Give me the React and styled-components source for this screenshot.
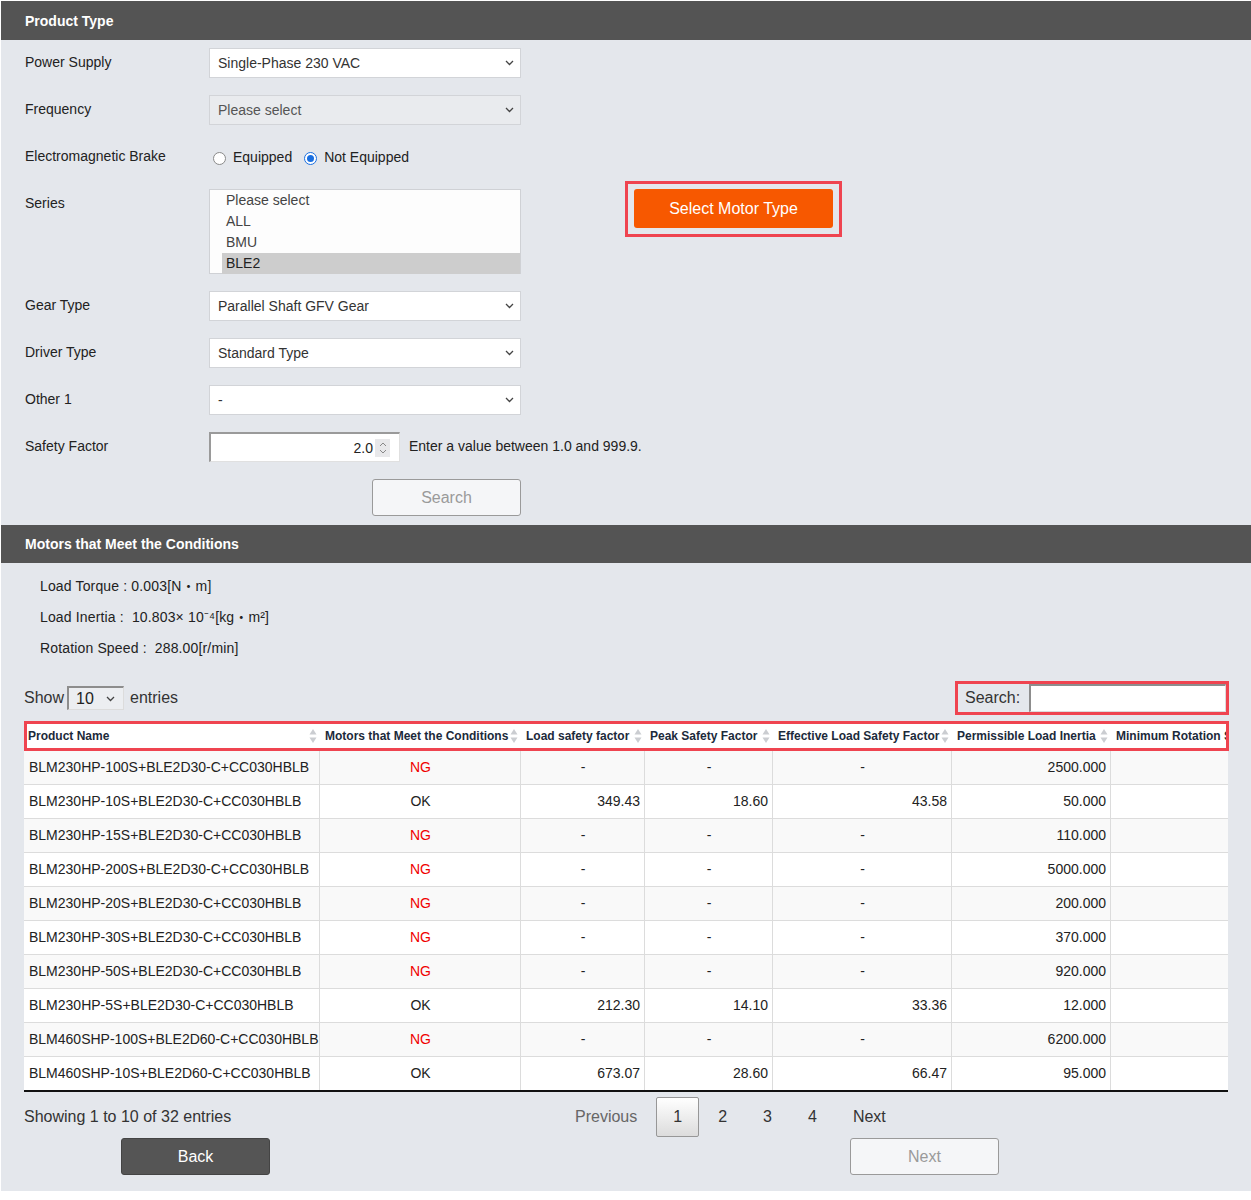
import React from 'react';
import styled, { createGlobalStyle } from 'styled-components';

const Global = createGlobalStyle`
  html, body { margin: 0; padding: 0; background: #fff; }
  body { font-family: "Liberation Sans", Arial, "Noto Sans CJK JP", sans-serif; color: #222; }
  * { box-sizing: border-box; }
`;

const RED = '#ef4450';
const COLS = [296, 201, 124, 128, 179, 159, 170];

const Page = styled.div`
  margin: 1px 0 0 1px;
  width: 1250px;
  background: #e4e7ec;
  padding-bottom: 16px;
`;

const SectionBar = styled.div`
  height: ${p => p.$h}px;
  background: #545454;
  color: #fff;
  font-weight: bold;
  font-size: 14px;
  display: flex;
  align-items: center;
  padding-left: 24px;
`;

const Form = styled.div`
  display: flex;
  flex-direction: column;
  gap: 17px;
  padding: 8px 0 9px 24px;
`;

const FormRow = styled.div`
  display: flex;
  align-items: flex-start;
  min-height: 30px;
`;

const Label = styled.div`
  width: 184px;
  line-height: 29px;
  font-size: 14px;
  color: #222;
`;

const SelectBox = styled.div`
  width: 312px;
  height: 30px;
  border: 1px solid #d2d4d8;
  background: ${p => (p.$disabled ? '#e9ebee' : '#fff')};
  color: ${p => (p.$disabled ? '#555' : '#333')};
  font-size: 14px;
  padding: 0 6px 0 8px;
  display: flex;
  align-items: center;
  justify-content: space-between;
`;

const Chevron = () => (
  <svg width="9" height="6" viewBox="0 0 9 6">
    <path d="M1 1 L4.5 4.5 L8 1" fill="none" stroke="#444" strokeWidth="1.3" />
  </svg>
);

const Select = ({ value, disabled }) => (
  <SelectBox $disabled={disabled}>
    <span>{value}</span>
    <Chevron />
  </SelectBox>
);

const RadioGroup = styled.div`
  height: 30px;
  display: flex;
  align-items: center;
  font-size: 14px;
  color: #222;
`;

const RadioOption = styled.label`
  display: flex;
  align-items: center;
  gap: 7px;
  margin-left: ${p => p.$ml}px;
`;

const RadioDot = styled.span`
  width: 13px;
  height: 13px;
  border-radius: 50%;
  background: #fff;
  border: 1px solid ${p => (p.$checked ? '#1a6fe0' : '#8a8a8a')};
  display: flex;
  align-items: center;
  justify-content: center;
  margin-top: 2px;
  &::after {
    content: '';
    width: 7px;
    height: 7px;
    border-radius: 50%;
    background: ${p => (p.$checked ? '#1a6fe0' : 'transparent')};
  }
`;

const ListBox = styled.div`
  width: 312px;
  height: 85px;
  border: 1px solid #cfd1d5;
  background: #fdfdfd;
  display: flex;
  flex-direction: column;
`;

const ListItem = styled.div`
  height: 21px;
  line-height: 21px;
  margin-left: 12px;
  padding-left: 4px;
  font-size: 14px;
  color: ${p => (p.$selected ? '#222' : '#444')};
  background: ${p => (p.$selected ? '#cdcdcd' : 'transparent')};
`;

const MotorBtnFrame = styled.div`
  margin: -8px 0 0 104px;
  border: 3px solid ${RED};
  padding: 5px 6px 6px;
`;

const OrangeButton = styled.button`
  width: 199px;
  height: 39px;
  border: none;
  border-radius: 3px;
  background: #f75800;
  color: #fff;
  font-family: inherit;
  font-size: 16px;
`;

const NumberBox = styled.div`
  width: 191px;
  height: 30px;
  background: #fff;
  border-style: solid;
  border-width: 2px 1px 1px 2px;
  border-color: #9a9a9a #e0e0e0 #e0e0e0 #9a9a9a;
  display: flex;
  align-items: center;
  justify-content: flex-end;
  padding-right: 9px;
  font-size: 14px;
  color: #222;
`;

const Spinner = styled.span`
  width: 15px;
  height: 18px;
  margin-left: 2px;
  background: #e8e8ea;
  display: flex;
  flex-direction: column;
  align-items: center;
  justify-content: center;
  gap: 2px;
`;

const Hint = styled.span`
  margin-left: 9px;
  line-height: 29px;
  font-size: 14px;
  color: #222;
`;

const ButtonRow = styled.div`
  padding-left: 347px;
`;

const GhostButton = styled.button`
  width: 149px;
  height: 37px;
  border: 1px solid #9a9a9a;
  border-radius: 3px;
  background: #f5f6f8;
  color: #9a9a9a;
  font-family: inherit;
  font-size: 16px;
  margin-left: ${p => p.$ml || 0}px;
`;

const Info = styled.div`
  padding: 8px 0 0 39px;
  font-size: 14px;
  color: #222;
`;

const InfoLine = styled.div`
  line-height: 31px;
  white-space: pre;
  letter-spacing: 0.15px;
`;

const ControlsRow = styled.div`
  margin-top: 17px;
  padding: 0 22px 0 23px;
  height: 34px;
  display: flex;
  align-items: center;
  justify-content: space-between;
  font-size: 16px;
  color: #333;
`;

const ShowGroup = styled.div`
  display: flex;
  align-items: center;
`;

const LengthSelect = styled.div`
  width: 57px;
  height: 24px;
  margin: 0 6px 0 3px;
  background: #eceef1;
  border-style: solid;
  border-width: 2px 1px 1px 2px;
  border-color: #8d8d8d #dcdcdc #dcdcdc #8d8d8d;
  padding: 0 8px 0 7px;
  display: flex;
  align-items: center;
  justify-content: space-between;
  color: #222;
`;

const SearchFrame = styled.div`
  width: 274px;
  height: 34px;
  border: 3px solid ${RED};
  display: flex;
  align-items: center;
  padding-left: 7px;
  gap: 9px;
`;

const SearchInput = styled.div`
  flex: 1;
  height: 28px;
  background: #fff;
  border-style: solid;
  border-width: 2px 1px 1px 2px;
  border-color: #8d8d8d #dcdcdc #dcdcdc #8d8d8d;
`;

const TableArea = styled.div`
  margin: 6px 22px 0 23px;
`;

const HeadFrame = styled.div`
  border: 3px solid ${RED};
  background: #fff;
  overflow: hidden;
  height: 30px;
`;

const Grid = styled.div`
  display: grid;
  grid-template-columns: ${p => p.$cols.map(c => `${c}px`).join(' ')};
  width: max-content;
`;

const HeadCell = styled.div`
  height: 24px;
  display: flex;
  align-items: center;
  justify-content: space-between;
  padding: 0 3px 0 ${p => (p.$first ? 1 : 5)}px;
  font-size: 12px;
  font-weight: bold;
  color: #1c2a3b;
  white-space: nowrap;
  overflow: hidden;
`;

const SortIcon = () => (
  <svg width="8" height="16" viewBox="0 0 8 16" style={{ flex: 'none' }}>
    <path d="M4 1 L7.5 6.5 L0.5 6.5 Z" fill="#cbcdd1" />
    <path d="M4 15 L7.5 9.5 L0.5 9.5 Z" fill="#cbcdd1" />
  </svg>
);

const BodyFrame = styled.div`
  overflow: hidden;
  width: 1204px;
  border-bottom: 2px solid #111;
`;

const Row = styled(Grid)`
  background: ${p => (p.$odd ? '#f9f9f9' : '#fff')};
  border-bottom: ${p => (p.$last ? 'none' : '1px solid #dcdcdc')};
`;

const Cell = styled.div`
  height: 33px;
  display: flex;
  align-items: center;
  justify-content: ${p => p.$align};
  padding: 0 4px 1px 5px;
  border-right: 1px solid #dcdcdc;
  font-size: 14px;
  color: ${p => (p.$ng ? '#f00000' : '#222')};
  white-space: nowrap;
`;

const FooterTop = styled.div`
  display: flex;
  align-items: center;
  margin-top: 5px;
  padding-left: 23px;
  font-size: 16px;
  color: #333;
`;

const FooterInfo = styled.div`
  flex: 0 0 532px;
`;

const Pager = styled.div`
  display: flex;
  align-items: center;
`;

const PageBtn = styled.span`
  height: 40px;
  line-height: 38px;
  padding: 0 16px;
  margin-left: 2px;
  border: 1px solid ${p => (p.$current ? '#979797' : 'transparent')};
  border-radius: 2px;
  background: ${p => (p.$current ? 'linear-gradient(#ffffff, #dcdcdc)' : 'transparent')};
  color: ${p => (p.$disabled ? '#666' : '#333')};
`;

const FooterBottom = styled.div`
  display: flex;
  margin-top: 1px;
  padding-left: 120px;
`;

const DarkButton = styled.button`
  width: 149px;
  height: 37px;
  border: 1px solid #444;
  border-radius: 3px;
  background: #555;
  color: #fff;
  font-family: inherit;
  font-size: 16px;
`;

const rows = [
  ['BLM230HP-100S+BLE2D30-C+CC030HBLB', 'NG', '-', '-', '-', '2500.000'],
  ['BLM230HP-10S+BLE2D30-C+CC030HBLB', 'OK', '349.43', '18.60', '43.58', '50.000'],
  ['BLM230HP-15S+BLE2D30-C+CC030HBLB', 'NG', '-', '-', '-', '110.000'],
  ['BLM230HP-200S+BLE2D30-C+CC030HBLB', 'NG', '-', '-', '-', '5000.000'],
  ['BLM230HP-20S+BLE2D30-C+CC030HBLB', 'NG', '-', '-', '-', '200.000'],
  ['BLM230HP-30S+BLE2D30-C+CC030HBLB', 'NG', '-', '-', '-', '370.000'],
  ['BLM230HP-50S+BLE2D30-C+CC030HBLB', 'NG', '-', '-', '-', '920.000'],
  ['BLM230HP-5S+BLE2D30-C+CC030HBLB', 'OK', '212.30', '14.10', '33.36', '12.000'],
  ['BLM460SHP-100S+BLE2D60-C+CC030HBLB', 'NG', '-', '-', '-', '6200.000'],
  ['BLM460SHP-10S+BLE2D60-C+CC030HBLB', 'OK', '673.07', '28.60', '66.47', '95.000'],
];

const headers = [
  'Product Name',
  'Motors that Meet the Conditions',
  'Load safety factor',
  'Peak Safety Factor',
  'Effective Load  Safety Factor',
  'Permissible Load Inertia',
  'Minimum Rotation Speed',
];

const headCols = [COLS[0] - 3, ...COLS.slice(1)];

export default function App() {
  return (
    <>
      <Global />
      <Page>
        <SectionBar $h={39}>Product Type</SectionBar>
        <Form>
          <FormRow>
            <Label>Power Supply</Label>
            <Select value="Single-Phase 230 VAC" />
          </FormRow>
          <FormRow>
            <Label>Frequency</Label>
            <Select value="Please select" disabled />
          </FormRow>
          <FormRow>
            <Label>Electromagnetic Brake</Label>
            <RadioGroup>
              <RadioOption $ml={4}>
                <RadioDot />
                Equipped
              </RadioOption>
              <RadioOption $ml={12}>
                <RadioDot $checked />
                Not Equipped
              </RadioOption>
            </RadioGroup>
          </FormRow>
          <FormRow>
            <Label>Series</Label>
            <ListBox>
              <ListItem>Please select</ListItem>
              <ListItem>ALL</ListItem>
              <ListItem>BMU</ListItem>
              <ListItem $selected>BLE2</ListItem>
            </ListBox>
            <MotorBtnFrame>
              <OrangeButton>Select Motor Type</OrangeButton>
            </MotorBtnFrame>
          </FormRow>
          <FormRow>
            <Label>Gear Type</Label>
            <Select value="Parallel Shaft GFV Gear" />
          </FormRow>
          <FormRow>
            <Label>Driver Type</Label>
            <Select value="Standard Type" />
          </FormRow>
          <FormRow>
            <Label>Other 1</Label>
            <Select value="-" />
          </FormRow>
          <FormRow>
            <Label>Safety Factor</Label>
            <NumberBox>
              2.0
              <Spinner>
                <svg width="8" height="5" viewBox="0 0 8 5">
                  <path d="M1 4 L4 1 L7 4" fill="none" stroke="#888" strokeWidth="1" />
                </svg>
                <svg width="8" height="5" viewBox="0 0 8 5">
                  <path d="M1 1 L4 4 L7 1" fill="none" stroke="#888" strokeWidth="1" />
                </svg>
              </Spinner>
            </NumberBox>
            <Hint>Enter a value between 1.0 and 999.9.</Hint>
          </FormRow>
          <ButtonRow>
            <GhostButton>Search</GhostButton>
          </ButtonRow>
        </Form>

        <SectionBar $h={38}>Motors that Meet the Conditions</SectionBar>
        <Info>
          <InfoLine>Load Torque : 0.003[N・m]</InfoLine>
          <InfoLine>Load Inertia :  10.803× 10⁻⁴[kg・m²]</InfoLine>
          <InfoLine>Rotation Speed :  288.00[r/min]</InfoLine>
        </Info>

        <ControlsRow>
          <ShowGroup>
            Show
            <LengthSelect>
              <span>10</span>
              <Chevron />
            </LengthSelect>
            entries
          </ShowGroup>
          <SearchFrame>
            Search:
            <SearchInput />
          </SearchFrame>
        </ControlsRow>

        <TableArea>
          <HeadFrame>
            <Grid $cols={headCols}>
              {headers.map((h, i) => (
                <HeadCell key={h} $first={i === 0}>
                  <span>{h}</span>
                  {i < headers.length - 1 && <SortIcon />}
                </HeadCell>
              ))}
            </Grid>
          </HeadFrame>
          <BodyFrame>
            {rows.map((r, ri) => (
              <Row key={r[0]} $cols={COLS} $odd={ri % 2 === 0} $last={ri === rows.length - 1}>
                <Cell $align="flex-start">{r[0]}</Cell>
                <Cell $align="center" $ng={r[1] === 'NG'}>{r[1]}</Cell>
                {r.slice(2, 5).map((v, ci) => (
                  <Cell key={ci} $align={v === '-' ? 'center' : 'flex-end'}>
                    {v}
                  </Cell>
                ))}
                <Cell $align="flex-end">{r[5]}</Cell>
                <Cell $align="flex-end" />
              </Row>
            ))}
          </BodyFrame>
        </TableArea>

        <FooterTop>
          <FooterInfo>Showing 1 to 10 of 32 entries</FooterInfo>
          <Pager>
            <PageBtn $disabled>Previous</PageBtn>
            <PageBtn $current>1</PageBtn>
            <PageBtn>2</PageBtn>
            <PageBtn>3</PageBtn>
            <PageBtn>4</PageBtn>
            <PageBtn>Next</PageBtn>
          </Pager>
        </FooterTop>
        <FooterBottom>
          <DarkButton>Back</DarkButton>
          <GhostButton $ml={580}>Next</GhostButton>
        </FooterBottom>
      </Page>
    </>
  );
}
